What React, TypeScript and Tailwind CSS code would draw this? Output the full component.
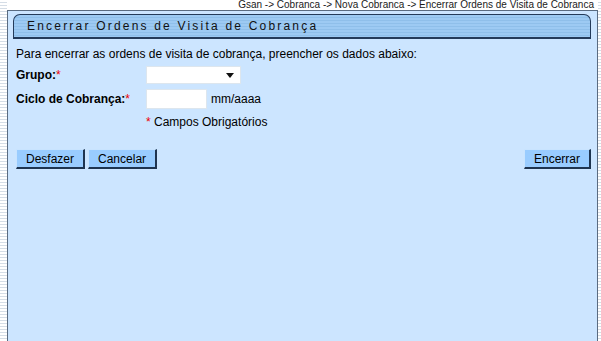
import React from 'react';

const stripe =
  'bg-[repeating-linear-gradient(to_bottom,#ffffff_0px,#ffffff_2px,#d5dde6_2px,#d5dde6_3px)]';

const btn =
  'h-[20px] px-[9px] bg-[#99ccff] border border-t-[#c9e4ff] border-l-[#c9e4ff] border-r-[#1e3450] border-b-[#1e3450] border-r-2 border-b-2 text-[12px] leading-[16px]';

export default function App() {
  return (
    <div className="w-[601px] h-[341px] overflow-hidden bg-white flex font-['Liberation_Sans',Arial,sans-serif] text-black">
      <div className={`w-[7px] h-full ${stripe}`} />
      <div className="flex-1 flex flex-col">
        <div className="h-[10px] text-right pr-[4px]">
          <div className="text-[10px] leading-[10px] text-[#1a1a1a]">
            Gsan -&gt; Cobranca -&gt; Nova Cobranca -&gt; Encerrar Ordens de Visita de Cobranca
          </div>
        </div>
        <div className="flex-1 bg-[#cce5ff] border-l border-r border-t border-[#5a6b80] pl-[5px] pr-[6px] pt-[3px]">
          <div className="h-[25px] rounded-tl-[7px] rounded-tr-[7px] border border-b-2 border-[#243b5a] bg-[repeating-linear-gradient(to_bottom,#9dcaf3_0px,#9dcaf3_2px,#8fbfea_2px,#8fbfea_3px)] flex items-center pl-[13px]">
            <span className="text-[12px] tracking-[2.2px] text-[#111]">
              Encerrar Ordens de Visita de Cobrança
            </span>
          </div>
          <div className="pl-[3px] text-[12px]">
            <p className="mt-[8px] leading-[14px]">
              Para encerrar as ordens de visita de cobrança, preencher os dados abaixo:
            </p>
            <div className="flex items-center mt-[5px] h-[18px]">
              <span className="w-[130px] font-bold">
                Grupo:<span className="text-[#e00] font-normal">*</span>
              </span>
              <div className="w-[95px] h-[18px] bg-white border border-[#dde6ee] flex items-center justify-end pr-[6px]">
                <svg width="8" height="5" viewBox="0 0 8 5">
                  <path d="M0 0h8L4 5z" fill="#111" />
                </svg>
              </div>
            </div>
            <div className="flex items-center mt-[5px] h-[20px]">
              <span className="w-[130px] font-bold">
                Ciclo de Cobrança:<span className="text-[#e00] font-normal">*</span>
              </span>
              <div className="w-[61px] h-[20px] bg-white border border-[#dde6ee]" />
              <span className="ml-[4px]">mm/aaaa</span>
            </div>
            <div className="mt-[6px] pl-[130px] leading-[14px]">
              <span className="text-[#e00]">*</span> Campos Obrigatórios
            </div>
            <div className="flex justify-between mt-[20px]">
              <div className="flex gap-[3px]">
                <button className={btn}>Desfazer</button>
                <button className={btn}>Cancelar</button>
              </div>
              <button className={btn}>Encerrar</button>
            </div>
          </div>
        </div>
      </div>
      <div className={`w-[3px] h-full ${stripe}`} />
    </div>
  );
}
